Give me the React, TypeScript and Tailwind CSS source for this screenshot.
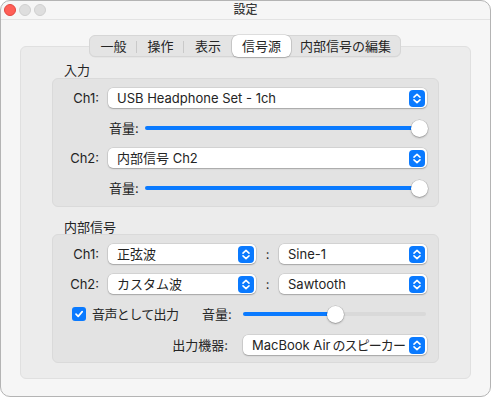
import type { ReactNode } from 'react';

function Stepper() {
  return (
    <svg width="16" height="17" viewBox="0 0 16 17" className="shrink-0">
      <rect x="0" y="0" width="16" height="17" rx="4" fill="#0a7aff" />
      <path d="M5 7.2 L8 4.4 L11 7.2" fill="none" stroke="#fff" strokeWidth="1.6" strokeLinecap="round" strokeLinejoin="round" />
      <path d="M5 9.8 L8 12.6 L11 9.8" fill="none" stroke="#fff" strokeWidth="1.6" strokeLinecap="round" strokeLinejoin="round" />
    </svg>
  );
}

function Popup({ children, width }: { children: ReactNode; width: string }) {
  return (
    <div
      className={`flex h-[20px] items-center justify-between rounded-[5px] bg-white pl-[9px] pr-[2px] shadow-[0_0_0_0.5px_rgba(0,0,0,0.14),0_1px_1.5px_rgba(0,0,0,0.22)] ${width}`}
    >
      <span className="whitespace-nowrap text-[13px] leading-[16px] text-[#242424]">{children}</span>
      <Stepper />
    </div>
  );
}

function Slider({ width, value }: { width: number; value: number }) {
  const thumb = 17;
  const pos = Math.round((width - thumb) * value);
  return (
    <div className="relative h-[20px] shrink-0" style={{ width }}>
      <div className="absolute left-0 right-[1px] top-[8px] h-[4px] rounded-full bg-[#d9d9d9]" />
      <div
        className="absolute left-0 top-[8px] h-[4px] rounded-full bg-[#0a7aff]"
        style={{ width: pos + thumb / 2 }}
      />
      <div
        className="absolute top-[1.5px] h-[17px] w-[17px] rounded-full bg-white shadow-[0_0_0_0.5px_rgba(0,0,0,0.18),0_1px_2px_rgba(0,0,0,0.28)]"
        style={{ left: pos }}
      />
    </div>
  );
}

function Label({ children, className = '' }: { children: ReactNode; className?: string }) {
  return (
    <div className={`shrink-0 whitespace-nowrap text-[13px] leading-[16px] text-[#242424] ${className}`}>{children}</div>
  );
}

const TABS = [
  { name: '一般', w: 'w-[47px]' },
  { name: '操作', w: 'w-[47px]' },
  { name: '表示', w: 'w-[48px]' },
  { name: '信号源', w: 'w-[59px]', active: true },
  { name: '内部信号の編集', w: 'w-[109px]' },
];

export default function App() {
  return (
    <div className="h-[397px] w-[491px] bg-white font-[Inter,'Noto_Sans_CJK_JP',sans-serif]">
      <div className="flex h-[397px] w-[491px] flex-col overflow-hidden rounded-[10px] border border-[#b4b4b4] bg-[#f6f6f6]">
        {/* title bar */}
        <div className="relative flex h-[19px] shrink-0 items-center justify-center border-b border-[#e3e3e3]">
          <div className="absolute left-[3px] top-[3px] flex gap-[3px]">
            <div className="h-[12px] w-[12px] rounded-full border border-[#e2463f] bg-[#ff5f57]" />
            <div className="h-[12px] w-[12px] rounded-full border border-[#cfcfcf] bg-[#dedede]" />
            <div className="h-[12px] w-[12px] rounded-full border border-[#cfcfcf] bg-[#dedede]" />
          </div>
          <span className="text-[12px] font-medium leading-[16px] text-[#3a3a3a]">設定</span>
        </div>

        {/* content */}
        <div className="flex flex-col px-[19px] pt-[15px]">
          <div className="relative z-10 flex justify-center pr-[1px]">
            <div className="flex h-[22px] items-center rounded-[6px] border border-[#d6d6d6] bg-[#e4e4e4] shadow-[0_0.5px_0.5px_rgba(0,0,0,0.06)]">
              {TABS.map((t, i) => {
                const next = TABS[i + 1];
                const sep = next && !t.active && !next.active;
                return (
                  <div key={t.name} className="relative flex h-full items-center">
                    <div
                      className={`flex h-[22px] items-center justify-center whitespace-nowrap text-[13px] leading-[16px] text-[#242424] ${t.w} ${
                        t.active
                          ? 'rounded-[6px] bg-white shadow-[0_0_0_0.5px_rgba(0,0,0,0.2),0_1px_1.5px_rgba(0,0,0,0.18)]'
                          : ''
                      }`}
                    >
                      {t.name}
                    </div>
                    {sep && <div className="absolute right-0 top-[5px] h-[12px] w-px bg-[#c9c9c9]" />}
                  </div>
                );
              })}
            </div>
          </div>

          <div className="-mt-[11px] flex h-[333px] flex-col rounded-[6px] border border-[#e0e0e0] bg-[#ececec] px-[31px] pt-[16px]">
            <div className="h-[14px] pl-[12px] text-[13px] leading-[14px] text-[#242424]">入力</div>

            {/* 入力 group */}
            <div className="mt-[1px] flex h-[129px] flex-col rounded-[6px] border border-[#dadada] bg-[#e3e3e3] pt-[9px]">
              <div className="flex h-[20px] items-center">
                <Label className="w-[46px] text-right">Ch1:</Label>
                <div className="ml-[9px]">
                  <Popup width="w-[319px]">USB Headphone Set - 1ch</Popup>
                </div>
              </div>
              <div className="mt-[10px] flex h-[20px] items-center pl-[56px]">
                <Label className="w-[36px]">音量:</Label>
                <Slider width={283} value={1} />
              </div>
              <div className="mt-[10px] flex h-[20px] items-center">
                <Label className="w-[46px] text-right">Ch2:</Label>
                <div className="ml-[9px]">
                  <Popup width="w-[319px]">内部信号 Ch2</Popup>
                </div>
              </div>
              <div className="mt-[10px] flex h-[20px] items-center pl-[56px]">
                <Label className="w-[36px]">音量:</Label>
                <Slider width={283} value={1} />
              </div>
            </div>

            <div className="mt-[13px] h-[14px] pl-[12px] text-[13px] leading-[14px] text-[#242424]">内部信号</div>

            {/* 内部信号 group */}
            <div className="flex h-[129px] flex-col rounded-[6px] border border-[#dadada] bg-[#e3e3e3] pt-[9px]">
              <div className="flex h-[20px] items-center">
                <Label className="w-[46px] text-right">Ch1:</Label>
                <div className="ml-[9px]">
                  <Popup width="w-[148px]">正弦波</Popup>
                </div>
                <Label className="w-[23px] text-center">:</Label>
                <Popup width="w-[148px]">Sine-1</Popup>
              </div>
              <div className="mt-[10px] flex h-[20px] items-center">
                <Label className="w-[46px] text-right">Ch2:</Label>
                <div className="ml-[9px]">
                  <Popup width="w-[148px]">カスタム波</Popup>
                </div>
                <Label className="w-[23px] text-center">:</Label>
                <Popup width="w-[148px]">Sawtooth</Popup>
              </div>
              <div className="mt-[10px] flex h-[20px] items-center pl-[19px]">
                <div className="flex w-[130px] shrink-0 items-center gap-[6px]">
                  <div className="flex h-[14px] w-[14px] items-center justify-center rounded-[3px] bg-[#0a7aff]">
                    <svg width="10" height="10" viewBox="0 0 10 10">
                      <path d="M2 5.2 L4.2 7.4 L8.2 2.6" fill="none" stroke="#fff" strokeWidth="1.7" strokeLinecap="round" strokeLinejoin="round" />
                    </svg>
                  </div>
                  <span className="whitespace-nowrap text-[13px] leading-[16px] tracking-[-0.6px] text-[#242424]">
                    音声として出力
                  </span>
                </div>
                <Label className="w-[41px]">音量:</Label>
                <Slider width={184} value={0.5} />
              </div>
              <div className="mt-[11px] flex h-[20px] items-center">
                <Label className="w-[175px] text-right">出力機器:</Label>
                <div className="ml-[15px]">
                  <Popup width="w-[184px]">
                    MacBook Air<span className="ml-[2px] tracking-[-0.9px]">のスピーカー</span>
                  </Popup>
                </div>
              </div>
            </div>
          </div>
        </div>
      </div>
    </div>
  );
}
